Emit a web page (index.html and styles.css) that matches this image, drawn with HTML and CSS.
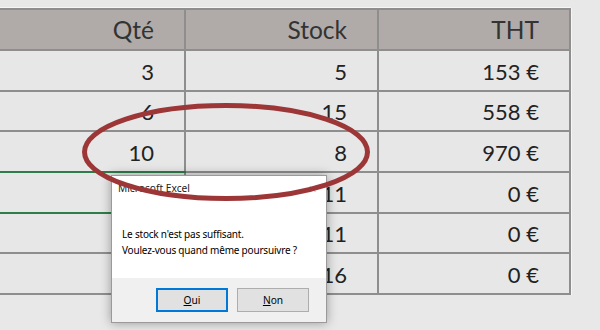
FILE: index.html
```html
<!DOCTYPE html>
<html lang="fr">
<head>
  <meta charset="UTF-8" />
  <meta name="viewport" content="width=device-width, initial-scale=1.0" />
  <title>Stock - Microsoft Excel</title>
  <link rel="stylesheet" href="styles.css">
</head>
<body>
  <div class="sheet">
    <table class="grid">
      <thead>
        <tr>
          <th class="c1">Qté</th>
          <th class="c2">Stock</th>
          <th class="c3">THT</th>
        </tr>
      </thead>
      <tbody>
        <tr><td>3</td><td>5</td><td>153 €</td></tr>
        <tr><td>6</td><td>15</td><td>558 €</td></tr>
        <tr class="picked"><td>10</td><td>8</td><td>970 €</td></tr>
        <tr class="sel"><td></td><td>11</td><td>0 €</td></tr>
        <tr><td></td><td>11</td><td>0 €</td></tr>
        <tr><td></td><td>16</td><td>0 €</td></tr>
      </tbody>
    </table>

    <div class="msgbox">
      <div class="msg-title">
        <span>Microsoft Excel</span>
        <span class="msg-close">✕</span>
      </div>
      <div class="msg-body">
        <p>Le stock n'est pas suffisant.</p>
        <p>Voulez-vous quand même poursuivre ?</p>
      </div>
      <div class="msg-foot">
        <button class="btn default"><u>O</u>ui</button>
        <button class="btn"><u>N</u>on</button>
      </div>
    </div>

    <svg class="circle" width="600" height="330" viewBox="0 0 600 330">
      <ellipse cx="226" cy="152" rx="141.5" ry="46.5" fill="none" stroke="#9d3636" stroke-width="5"/>
    </svg>
  </div>
</body>
</html>
```

FILE: styles.css
```css
body {
  margin: 0;
  background: #e8e8e8;
  font-family: 'Lato', sans-serif;
  overflow: hidden;
}
.sheet {
  position: relative;
  width: 600px;
  height: 330px;
  padding-top: 8px;
  box-sizing: border-box;
}
.grid {
  border-collapse: collapse;
  table-layout: fixed;
  width: 571px;
  border-top: 2px solid #8e8e8e;
  border-right: 2px solid #8e8e8e;
  box-shadow: 0 -1px 0 #f6f6f6, 1px 0 0 #f6f6f6;
}
.grid th, .grid td {
  text-align: right;
  padding: 0 30px 0 0;
  font-size: 22px;
  color: #222;
  border-bottom: 2px solid #8e8e8e;
  border-left: 2px solid #8e8e8e;
}
.grid th:first-child, .grid td:first-child {
  border-left: none;
}
.c1 { width: 154px; }
.c2 { width: 161px; }
.grid th {
  background: #b0aba8;
  font-weight: 400;
  font-size: 24.5px;
  color: #333;
  height: 39px;
}
.grid td {
  background: #e7e7e7;
  height: 36.67px;
  padding-top: 2px;
}
.grid tr.picked td:first-child,
.grid tr.sel td:first-child {
  border-bottom-color: #2e7d4a;
}

.msgbox {
  position: absolute;
  left: 111px;
  top: 175px;
  width: 216px;
  height: 148px;
  background: #fff;
  border: 1px solid #9a9a9a;
  box-sizing: border-box;
  box-shadow: 0 0 10px rgba(0, 0, 0, 0.35);
  font-family: 'Noto Sans', sans-serif;
  font-size: 10.2px;
  color: #000;
  display: flex;
  flex-direction: column;
}
.msg-title {
  display: flex;
  justify-content: space-between;
  align-items: center;
  padding: 2px 9px 0 6px;
  height: 20px;
  color: #222;
}
.msg-close {
  color: #c8c8c8;
  font-size: 11px;
}
.msg-body {
  flex: 1;
  padding: 28px 10px 0 10px;
  white-space: nowrap;
  font-size: 10px;
  letter-spacing: -0.2px;
}
.msg-body p {
  margin: 0;
  line-height: 16px;
}
.msg-foot {
  background: #f0f0f0;
  height: 44px;
  display: flex;
  justify-content: flex-end;
  align-items: center;
  gap: 9px;
  padding-right: 17px;
}
.btn {
  width: 72px;
  height: 24px;
  background: #e1e1e1;
  border: 1px solid #adadad;
  font-family: 'Noto Sans', sans-serif;
  font-size: 10.2px;
  color: #000;
  padding: 0;
}
.btn.default {
  border: 2px solid #0078d7;
}
.circle {
  position: absolute;
  left: 0;
  top: 0;
  pointer-events: none;
}
```
